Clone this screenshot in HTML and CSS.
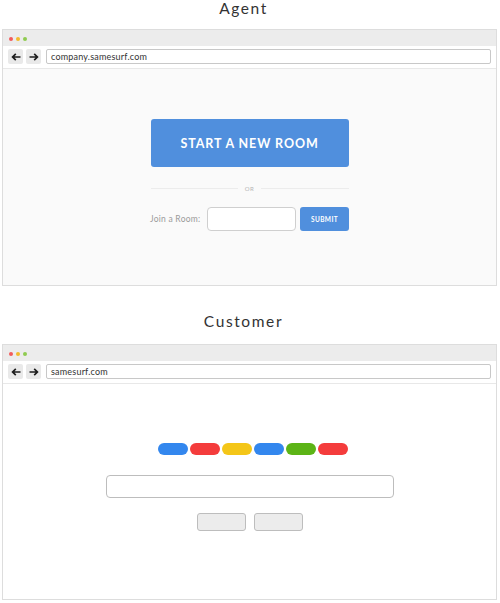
FILE: index.html
```html
<!DOCTYPE html>
<html>
<head>
<meta charset="utf-8">
<link rel="stylesheet" href="styles.css">
</head>
<body>
<section class="demo">
  <h2 class="label label-agent">Agent</h2>
  <div class="browser">
    <div class="topbar">
      <span class="dot dot-red"></span><span class="dot dot-yellow"></span><span class="dot dot-green"></span>
    </div>
    <div class="toolbar">
      <span class="nav-btn"><svg width="10" height="8" viewBox="0 0 10 8"><path d="M9.5 4H1.8M4.8 0.9L1.6 4L4.8 7.1" fill="none" stroke="#1d1d1d" stroke-width="1.7"/></svg></span>
      <span class="nav-btn"><svg width="10" height="8" viewBox="0 0 10 8"><path d="M0.5 4H8.2M5.2 0.9L8.4 4L5.2 7.1" fill="none" stroke="#1d1d1d" stroke-width="1.7"/></svg></span>
      <div class="url">company.samesurf.com</div>
    </div>
    <div class="content content-agent">
      <div class="start-btn">START A NEW ROOM</div>
      <div class="or-row"><span class="or-line"></span><span class="or-text">OR</span><span class="or-line"></span></div>
      <div class="join-row">
        <span class="join-label">Join a Room:</span>
        <span class="join-input"></span>
        <span class="submit-btn">SUBMIT</span>
      </div>
    </div>
  </div>
</section>
<section class="demo">
  <h2 class="label label-customer">Customer</h2>
  <div class="browser">
    <div class="topbar">
      <span class="dot dot-red"></span><span class="dot dot-yellow"></span><span class="dot dot-green"></span>
    </div>
    <div class="toolbar">
      <span class="nav-btn"><svg width="10" height="8" viewBox="0 0 10 8"><path d="M9.5 4H1.8M4.8 0.9L1.6 4L4.8 7.1" fill="none" stroke="#1d1d1d" stroke-width="1.7"/></svg></span>
      <span class="nav-btn"><svg width="10" height="8" viewBox="0 0 10 8"><path d="M0.5 4H8.2M5.2 0.9L8.4 4L5.2 7.1" fill="none" stroke="#1d1d1d" stroke-width="1.7"/></svg></span>
      <div class="url">samesurf.com</div>
    </div>
    <div class="content content-customer">
      <div class="pills">
        <span class="pill pill-blue"></span><span class="pill pill-red"></span><span class="pill pill-yellow"></span><span class="pill pill-blue"></span><span class="pill pill-green"></span><span class="pill pill-red"></span>
      </div>
      <div class="cust-input"></div>
      <div class="cust-buttons"><span class="cust-btn"></span><span class="cust-btn"></span></div>
    </div>
  </div>
</section>
</body>
</html>
```
FILE: styles.css
```css
* { box-sizing: border-box; }
html, body { margin: 0; padding: 0; background: #fff; }
body { font-family: "Lato", "Noto Sans", sans-serif; color: #333; width: 500px; }

.label {
  margin: 0;
  font-size: 15.5px;
  font-weight: 400;
  line-height: 16px;
  letter-spacing: 1.6px;
  text-align: center;
  color: #333;
  padding-right: 13px;
}
.label-agent { height: 29px; }
.label-customer { margin-top: 27px; padding-top: 0; height: 31px; }

.browser {
  margin-left: 2px;
  width: 495px;
  border: 1px solid #dddddd;
  display: flex;
  flex-direction: column;
}
.topbar {
  height: 16px;
  background: #ececec;
  display: flex;
  align-items: center;
  gap: 3px;
  padding: 2px 0 0 6px;
}
.dot { width: 4px; height: 4px; border-radius: 50%; display: block; }
.dot-red { background: #f25c5c; }
.dot-yellow { background: #f3bb2c; }
.dot-green { background: #8fcb50; }

.toolbar {
  height: 23px;
  background: #fff;
  border-bottom: 1px solid #e8e8e8;
  display: flex;
  align-items: center;
  padding: 0 5px 1px 5px;
  gap: 3px;
}
.nav-btn {
  width: 15px;
  height: 15px;
  background: #e9e9e9;
  border-radius: 2px;
  display: flex;
  align-items: center;
  justify-content: center;
}
.url {
  flex: 1;
  margin-left: 2px;
  height: 15px;
  border: 1px solid #c8c8c8;
  border-radius: 2px;
  font-size: 9px;
  line-height: 13px;
  padding-left: 4px;
  color: #333;
  letter-spacing: 0.2px;
}

.content {
  display: flex;
  flex-direction: column;
  align-items: center;
}
.content-agent { height: 216px; background: #fafafa; padding-top: 50px; }
.content-customer { height: 215px; background: #fff; padding-top: 59px; }

.start-btn {
  width: 198px;
  height: 48px;
  background: #508fdd;
  border-radius: 3px;
  color: #fff;
  font-weight: 700;
  font-size: 12.5px;
  letter-spacing: 0.9px;
  display: flex;
  align-items: center;
  justify-content: center;
}
.or-row {
  width: 198px;
  height: 8px;
  margin-top: 17px;
  display: flex;
  align-items: center;
}
.or-line { flex: 1; height: 1px; background: #ececec; }
.or-text { font-size: 6px; color: #b5b5b5; margin: 0 7px; letter-spacing: 0.4px; }

.join-row {
  margin-top: 15px;
  width: 199px;
  height: 24px;
  display: flex;
  align-items: center;
}
.join-label { flex: 1; font-size: 8.5px; color: #9a9a9a; letter-spacing: 0.25px; white-space: nowrap; }
.join-input {
  width: 89px;
  height: 24px;
  background: #fff;
  border: 1px solid #cfcfcf;
  border-radius: 4px;
}
.submit-btn {
  margin-left: 4px;
  width: 49px;
  height: 24px;
  background: #508fdd;
  border-radius: 3px;
  color: #fff;
  font-size: 6.5px;
  font-weight: 700;
  letter-spacing: 0.4px;
  display: flex;
  align-items: center;
  justify-content: center;
}

.pills { display: flex; gap: 2px; padding-left: 6px; }
.pill { width: 30px; height: 12px; border-radius: 6px; display: block; }
.pill-blue { background: #3387ee; }
.pill-red { background: #f43c3c; }
.pill-yellow { background: #f4c618; }
.pill-green { background: #5cb416; }

.cust-input {
  margin-top: 20px;
  width: 288px;
  height: 23px;
  border: 1px solid #bdbdbd;
  border-radius: 4px;
  background: #fff;
}
.cust-buttons { margin-top: 15px; display: flex; gap: 8px; }
.cust-btn {
  width: 49px;
  height: 18px;
  background: #ececec;
  border: 1px solid #bdbdbd;
  border-radius: 3px;
  display: block;
}
```
